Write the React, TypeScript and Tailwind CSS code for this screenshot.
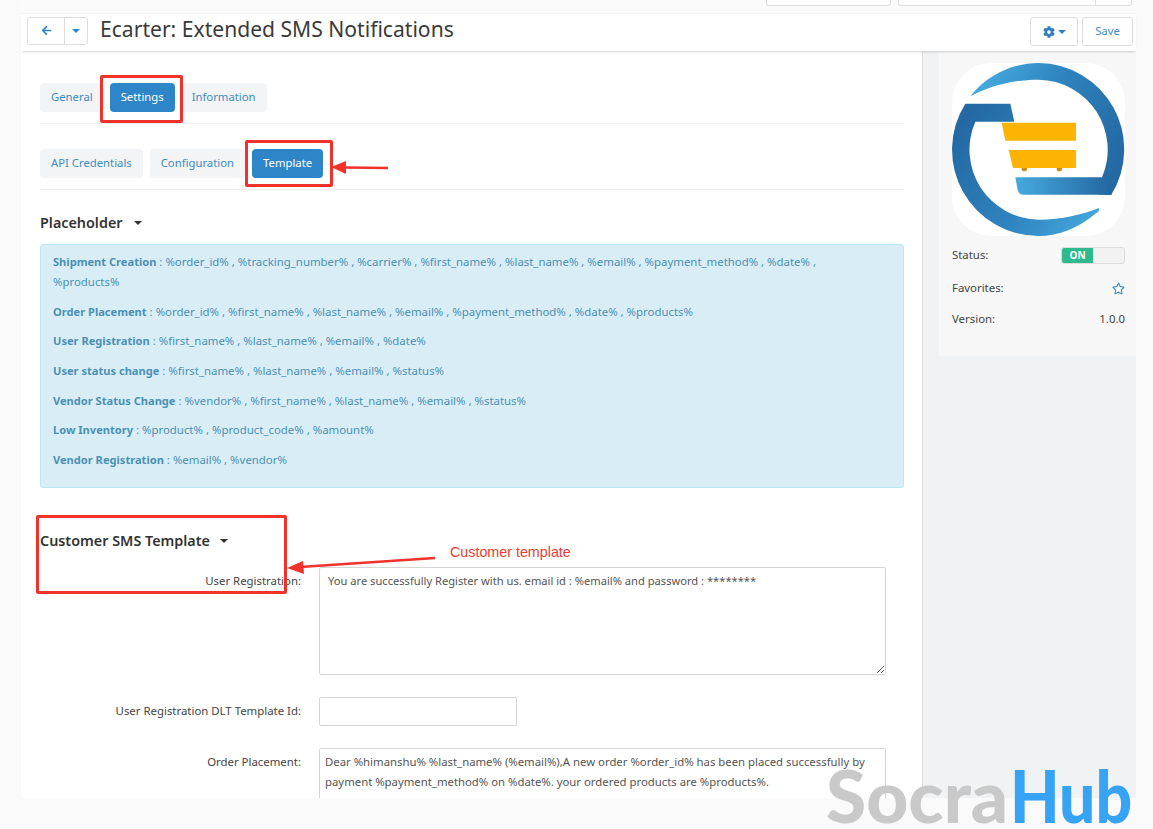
import React from "react";
import { FaArrowLeft, FaCog, FaRegStar } from "react-icons/fa";

const placeholders = [
  { name: "Shipment Creation", vars: "%order_id% , %tracking_number% , %carrier% , %first_name% , %last_name% , %email% , %payment_method% , %date% , %products%" },
  { name: "Order Placement", vars: "%order_id% , %first_name% , %last_name% , %email% , %payment_method% , %date% , %products%" },
  { name: "User Registration", vars: "%first_name% , %last_name% , %email% , %date%" },
  { name: "User status change", vars: "%first_name% , %last_name% , %email% , %status%" },
  { name: "Vendor Status Change", vars: "%vendor% , %first_name% , %last_name% , %email% , %status%" },
  { name: "Low Inventory", vars: "%product% , %product_code% , %amount%" },
  { name: "Vendor Registration", vars: "%email% , %vendor%" },
];

function Caret({ className }: { className: string }) {
  return <span className={`inline-block w-0 h-0 border-x-[4px] border-x-transparent border-t-[4px] ${className}`} />;
}

function Tab({ label, active }: { label: string; active?: boolean }) {
  return (
    <div className={`h-[29px] px-[11px] rounded-[4px] flex items-center text-[11.3px] ${active ? "bg-[#2e86c9] text-white" : "bg-[#f3f4f5] text-[#3e8cc4]"}`}>
      {label}
    </div>
  );
}

function Logo() {
  return (
    <svg viewBox="0 0 519 519" className="w-[173px] h-[173px] shrink-0">
      <defs>
        <linearGradient id="arcTop" x1="60" y1="100" x2="500" y2="300" gradientUnits="userSpaceOnUse">
          <stop offset="0" stopColor="#46aade" />
          <stop offset="0.45" stopColor="#2f84bf" />
          <stop offset="1" stopColor="#2469a3" />
        </linearGradient>
        <linearGradient id="arcBottom" x1="20" y1="200" x2="450" y2="480" gradientUnits="userSpaceOnUse">
          <stop offset="0" stopColor="#2469a3" />
          <stop offset="0.55" stopColor="#2f84bf" />
          <stop offset="1" stopColor="#46aade" />
        </linearGradient>
        <linearGradient id="bar" x1="190" y1="370" x2="470" y2="370" gradientUnits="userSpaceOnUse">
          <stop offset="0" stopColor="#46aade" />
          <stop offset="1" stopColor="#2469a3" />
        </linearGradient>
      </defs>
      <rect width="519" height="519" rx="118" fill="#ffffff" />
      <path d="M55 100 C110 30 190 0 260 0 A259 259 0 0 1 478 395 L440 395 L450 343 A210 210 0 0 0 260 50 C180 50 110 70 55 100Z" fill="url(#arcTop)" />
      <path d="M190 343 L452 343 L480 392 L478 395 L215 395 Q200 395 197 380Z" fill="url(#bar)" />
      <path d="M440 435 Q445 445 430 452 C380 495 320 519 260 519 A259 259 0 0 1 40 122 L175 122 L187 176 L70 176 A210 210 0 0 0 260 470 C330 470 390 455 440 435Z" fill="url(#arcBottom)" />
      <circle cx="217" cy="317" r="8" fill="#c98d10" />
      <circle cx="322" cy="317" r="8" fill="#c98d10" />
      <path d="M149 179 L372 179 L372 233 L160 233Z" fill="#fdb302" />
      <path d="M170 261 L372 261 L372 315 L183 315Z" fill="#fdb302" />
    </svg>
  );
}

export default function App() {
  return (
    <div className="relative w-[1153px] h-[829px] overflow-hidden bg-[#fafafa] text-[#444] text-[11.4px] font-['Noto_Sans',sans-serif]">
      <div className="h-[13px] ml-[21px] w-[1115px] flex justify-end gap-[7px] pr-[4px] bg-[#fbfbfb]">
        <div className="w-[125px] h-[6px] bg-white border border-t-0 border-[#ddd] rounded-b-[3px]" />
        <div className="w-[234px] h-[6px] bg-white border border-t-0 border-[#ddd] rounded-b-[3px] flex justify-end">
          <div className="w-[36px] border-l border-[#ddd]" />
        </div>
      </div>

      <div className="ml-[21px] w-[1115px]">
        <header className="relative z-10 h-[38px] bg-white border-t border-[#f2f2f2] shadow-[0_2px_2px_-1px_rgba(0,0,0,0.16)] flex items-center pl-[6px] pr-[3px]">
          <div className="h-[28px] flex border border-[#ddd] rounded-[3px] text-[#2e86c9] mb-[4px]">
            <div className="w-[37px] flex items-center justify-center border-r border-[#ddd]"><FaArrowLeft size={11} /></div>
            <div className="w-[22px] flex items-center justify-center"><Caret className="border-t-[#2e86c9]" /></div>
          </div>
          <h1 className="ml-[12px] mb-[8px] text-[21.1px] text-[#3a3a3a]">Ecarter: Extended SMS Notifications</h1>
          <div className="ml-auto mb-[2px] flex gap-[4px]">
            <div className="w-[48px] h-[29px] border border-[#ddd] rounded-[3px] flex items-center justify-center gap-[3px] text-[#2e7fc0]">
              <FaCog size={12} />
              <Caret className="border-t-[#2e7fc0]" />
            </div>
            <div className="w-[51px] h-[29px] border border-[#ddd] rounded-[3px] flex items-center justify-center text-[#3e8cc4] text-[11.3px]">Save</div>
          </div>
        </header>

        <div className="flex h-[747px] overflow-hidden">
          <main className="w-[902px] shrink-0 bg-white pl-[19px] pr-[18px] pt-[32px] border-r border-[#dcdcdc]">
            <div className="flex gap-[6px] pb-[11px] border-b border-[#eceeef]">
              <Tab label="General" />
              <Tab label="Settings" active />
              <Tab label="Information" />
            </div>
            <div className="flex gap-[7px] mt-[25px] pb-[11px] border-b border-[#eceeef]">
              <Tab label="API Credentials" />
              <Tab label="Configuration" />
              <Tab label="Template" active />
            </div>

            <div className="mt-[22px] h-[22px] flex items-center gap-[11px] font-semibold text-[14.35px] text-[#333]">
              Placeholder <Caret className="border-t-[#333]" />
            </div>

            <div className="mt-[10px] h-[244px] bg-[#d9edf7] border border-[#bce8f1] rounded-[3px] pl-[12px] pr-[60px] pt-[7px] text-[#4b91b6] text-[11.4px] leading-[20px]">
              {placeholders.map((p) => (
                <p key={p.name} className="mb-[9.7px]"><b className="font-bold text-[11.1px]">{p.name}</b> : {p.vars}</p>
              ))}
            </div>

            <div className="mt-[42px] h-[22px] flex items-center gap-[10px] font-semibold text-[14.35px] text-[#333]">
              Customer SMS Template <Caret className="border-t-[#333]" />
            </div>

            <div className="mt-[15px] flex">
              <label className="w-[261px] pt-[5px] text-right shrink-0">User Registration:</label>
              <textarea
                readOnly
                defaultValue="You are successfully Register with us. email id : %email% and password : ********"
                className="ml-[18px] w-[567px] h-[108px] border border-[#d5d5d5] rounded-[2px] px-[8px] py-[5px] text-[11.15px] text-[#555] outline-none"
              />
            </div>
            <div className="mt-[22px] flex">
              <label className="w-[261px] pt-[5px] text-right shrink-0">User Registration DLT Template Id:</label>
              <input readOnly className="ml-[18px] w-[198px] h-[29px] border border-[#d5d5d5] rounded-[2px] outline-none" />
            </div>
            <div className="mt-[22px] flex">
              <label className="w-[261px] pt-[5px] text-right shrink-0">Order Placement:</label>
              <textarea
                readOnly
                defaultValue="Dear %himanshu% %last_name% (%email%),A new order %order_id% has been placed successfully by payment %payment_method% on %date%. your ordered products are %products%."
                className="ml-[18px] w-[567px] h-[108px] border border-[#d5d5d5] rounded-[2px] px-[5px] py-[3px] text-[11.35px] leading-[20px] text-[#555] outline-none"
              />
            </div>
          </main>

          <aside className="flex-1 bg-[#f0f2f3] pl-[16px]">
            <div className="h-[305px] bg-[#f7f7f7] rounded-bl-[3px] pl-[13px] pr-[11px] pt-[12px]">
              <Logo />
              <div className="mt-[9px] flex items-center justify-between h-[20px]">
                <span>Status:</span>
                <div className="w-[64px] h-[17px] rounded-[3px] border border-[#ddd] flex overflow-hidden bg-[#f2f2f2]">
                  <div className="w-[31px] bg-[#2fb98e] text-white text-[10px] font-bold flex items-center justify-center">ON</div>
                </div>
              </div>
              <div className="mt-[13px] flex items-center justify-between h-[20px]">
                <span>Favorites:</span>
                <FaRegStar size={13} className="text-[#3e8cc4]" />
              </div>
              <div className="mt-[11px] flex items-center justify-between h-[20px]">
                <span>Version:</span>
                <span>1.0.0</span>
              </div>
            </div>
          </aside>
        </div>
      </div>

      {/* red annotations added on top of the screenshot */}
      <div className="absolute left-[100px] top-[75px] w-[83px] h-[48px] border-[3px] border-[#f0322b] rounded-[2px]" />
      <div className="absolute left-[245px] top-[140px] w-[88px] h-[47px] border-[3px] border-[#f0322b] rounded-[2px]" />
      <div className="absolute left-[36px] top-[515px] w-[251px] h-[79px] border-[3px] border-[#f0322b] rounded-[2px]" />
      <svg className="absolute left-0 top-0 pointer-events-none" width="1153" height="829">
        <path d="M345 167.5 L388 168" stroke="#f0322b" strokeWidth="2.5" />
        <path d="M331 167 L346 161 L346 174Z" fill="#f0322b" />
        <path d="M300 567 L435 558" stroke="#f0322b" strokeWidth="2.5" />
        <path d="M287 568 L303 561 L304 574Z" fill="#f0322b" />
      </svg>
      <span className="absolute left-[450px] top-[544px] text-[14.3px] leading-[16px] text-[#ee3a32] font-['Liberation_Sans',sans-serif]">Customer template</span>

      <div className="absolute left-[826px] top-[761px] text-[73px] leading-[68px] font-black font-['Lato',sans-serif] whitespace-nowrap flex">
        <span className="text-[#c9c9c9]">Socra</span>
        <span className="text-[#36a3f5] ml-[2px] inline-block origin-left scale-x-[0.88]">Hub</span>
      </div>
    </div>
  );
}
